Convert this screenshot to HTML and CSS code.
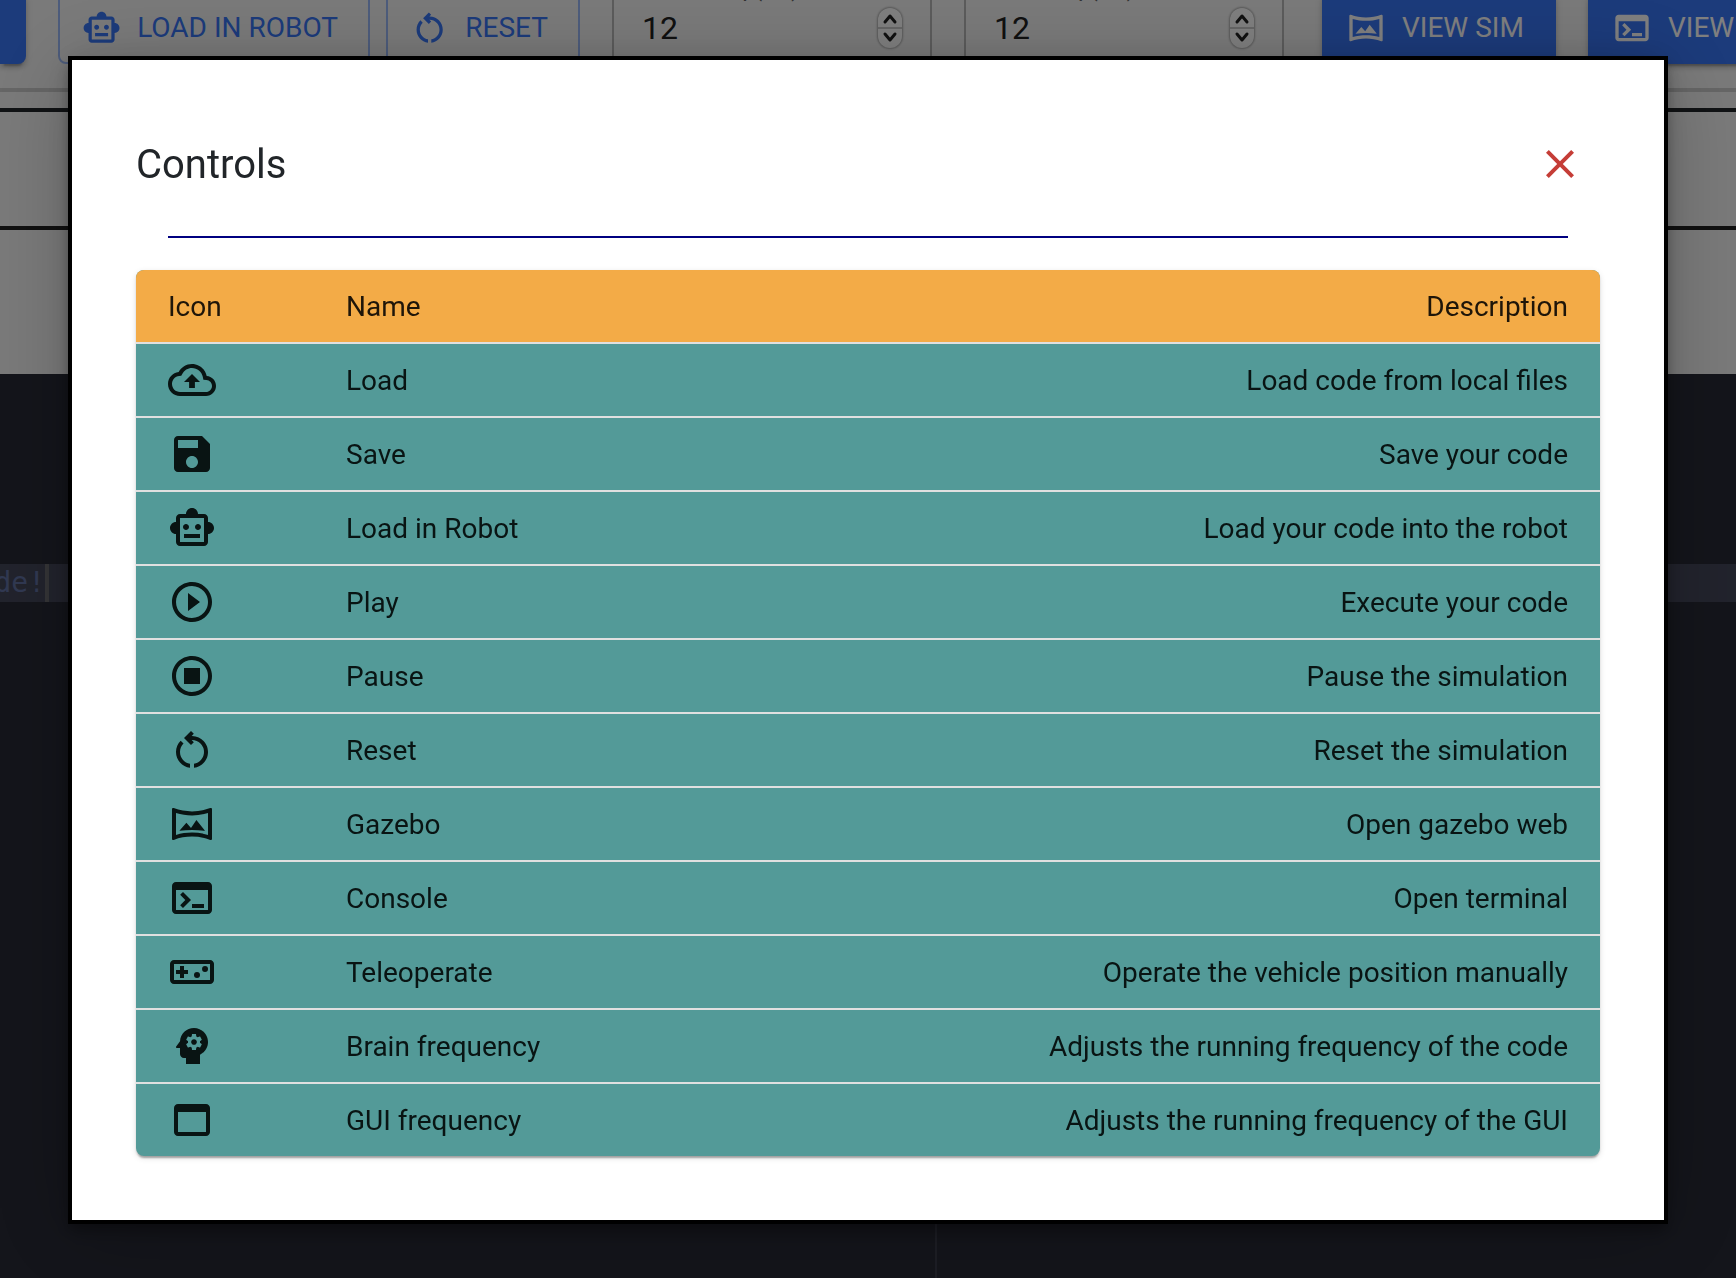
FILE: index.html
```html
<!DOCTYPE html>
<html lang="en">
<head>
<meta charset="utf-8">
<title>Controls</title>
<meta name="viewport" content="width=device-width, initial-scale=1">
<link rel="stylesheet" href="styles.css">
</head>
<body>
<svg class="sprite" aria-hidden="true">
  <symbol id="i-cloud" viewBox="0 0 24 24"><path d="M19.35 10.04C18.67 6.59 15.64 4 12 4 9.11 4 6.6 5.64 5.35 8.04 2.34 8.36 0 10.91 0 14c0 3.31 2.69 6 6 6h13c2.76 0 5-2.24 5-5 0-2.64-2.05-4.78-4.65-4.96zM19 18H6c-2.21 0-4-1.79-4-4 0-2.05 1.53-3.76 3.56-3.97l1.07-.11.5-.95C8.08 7.14 9.94 6 12 6c2.62 0 4.88 1.86 5.39 4.43l.3 1.5 1.53.11c1.56.1 2.78 1.41 2.78 2.96 0 1.65-1.35 3-3 3zM8 13h2.55v3h2.9v-3H16l-4-4z"/></symbol>
  <symbol id="i-save" viewBox="0 0 24 24"><path d="M17 3H5c-1.11 0-2 .9-2 2v14c0 1.1.89 2 2 2h14c1.1 0 2-.9 2-2V7l-4-4zm-5 16c-1.66 0-3-1.34-3-3s1.34-3 3-3 3 1.34 3 3-1.34 3-3 3zm3-10H5V5h10v4z"/></symbol>
  <symbol id="i-robot" viewBox="0 0 24 24"><path d="M20 9V7c0-1.1-.9-2-2-2h-3c0-1.66-1.34-3-3-3S9 3.34 9 5H6c-1.1 0-2 .9-2 2v2c-1.66 0-3 1.34-3 3s1.34 3 3 3v4c0 1.1.9 2 2 2h12c1.1 0 2-.9 2-2v-4c1.66 0 3-1.34 3-3s-1.34-3-3-3zm-2 10H6V7h12v12zm-9-6c-.83 0-1.5-.67-1.5-1.5S8.17 10 9 10s1.5.67 1.5 1.5S9.83 13 9 13zm7.5-1.5c0 .83-.67 1.5-1.5 1.5s-1.5-.67-1.5-1.5.67-1.5 1.5-1.5 1.5.67 1.5 1.5zM8 15h8v2H8v-2z"/></symbol>
  <symbol id="i-play" viewBox="0 0 24 24"><path d="M10 16.5l6-4.5-6-4.5v9zM12 2C6.48 2 2 6.48 2 12s4.48 10 10 10 10-4.48 10-10S17.52 2 12 2zm0 18c-4.41 0-8-3.59-8-8s3.59-8 8-8 8 3.59 8 8-3.59 8-8 8z"/></symbol>
  <symbol id="i-stop" viewBox="0 0 24 24"><path d="M12 2C6.48 2 2 6.48 2 12s4.48 10 10 10 10-4.48 10-10S17.52 2 12 2zm0 18c-4.41 0-8-3.59-8-8s3.59-8 8-8 8 3.59 8 8-3.59 8-8 8zM8 8h8v8H8z"/></symbol>
  <symbol id="i-reset" viewBox="0 0 24 24"><path d="M6 13c0-1.65.67-3.15 1.76-4.24L6.34 7.34C4.9 8.79 4 10.79 4 13c0 4.08 3.05 7.44 7 7.93v-2.02c-2.83-.48-5-2.94-5-5.91zm14 0c0-4.42-3.58-8-8-8-.06 0-.12.01-.18.01l1.09-1.09L11.5 2.5 8 6l3.5 3.5 1.41-1.41-1.08-1.08c.06 0 .12-.01.17-.01 3.31 0 6 2.69 6 6 0 2.97-2.17 5.43-5 5.91v2.02c3.95-.49 7-3.85 7-7.93z"/></symbol>
  <symbol id="i-panorama" viewBox="0 0 24 24"><path d="M20 6.54v10.91c-2.6-.77-5.28-1.16-8-1.16s-5.4.39-8 1.16V6.54c2.6.77 5.28 1.16 8 1.16 2.72.01 5.4-.38 8-1.16M21.43 4c-.1 0-.2.02-.31.06C18.18 5.16 15.09 5.7 12 5.7s-6.18-.55-9.12-1.64C2.77 4.02 2.66 4 2.57 4c-.34 0-.57.23-.57.63v14.75c0 .39.23.62.57.62.1 0 .2-.02.31-.06 2.94-1.1 6.03-1.64 9.12-1.64s6.18.55 9.12 1.64c.11.04.21.06.31.06.33 0 .57-.23.57-.63V4.63c0-.4-.24-.63-.57-.63zM5.7 15.4l3.5-4 2.3 2.6 2.7-4 4.3 5.4c-4.2-.5-8.6-.5-12.8 0z"/></symbol>
  <symbol id="i-terminal" viewBox="0 0 24 24"><path d="M20 4H4c-1.11 0-2 .9-2 2v12c0 1.1.89 2 2 2h16c1.1 0 2-.9 2-2V6c0-1.1-.89-2-2-2zm0 14H4V8h16v10zm-2-1h-6v-2h6v2zM7.5 17l-1.41-1.41L8.67 13l-2.59-2.59L7.5 9l4 4-4 4z"/></symbol>
  <symbol id="i-gamepad" viewBox="0 0 24 24"><path d="M21 6H3c-1.1 0-2 .9-2 2v8c0 1.1.9 2 2 2h18c1.1 0 2-.9 2-2V8c0-1.1-.9-2-2-2zm0 10H3V8h18v8zM6 15h2v-2h2v-2H8V9H6v2H4v2h2z"/><circle cx="14.5" cy="13.5" r="1.5"/><circle cx="18.5" cy="10.5" r="1.5"/></symbol>
  <symbol id="i-brain" viewBox="0 0 24 24"><path d="M13 8.57c-.79 0-1.43.64-1.43 1.43s.64 1.43 1.43 1.43 1.43-.64 1.43-1.43-.64-1.43-1.43-1.43z"/><path d="M13 3C9.25 3 6.2 5.94 6.02 9.64L4.1 12.2c-.25.33-.01.8.4.8H6v3c0 1.1.9 2 2 2h1v3h7v-4.68c2.36-1.12 4-3.53 4-6.32 0-3.87-3.13-7-7-7zm3 7c0 .13-.01.26-.02.39l.83.66c.08.06.1.16.05.25l-.8 1.39c-.05.09-.16.12-.24.09l-.99-.4c-.21.16-.43.29-.67.39L14 13.83c-.01.1-.1.17-.2.17h-1.6c-.1 0-.18-.07-.2-.17l-.15-1.06c-.25-.1-.47-.23-.68-.39l-.99.4c-.09.03-.2 0-.25-.09l-.8-1.39c-.05-.08-.03-.19.05-.25l.84-.66c-.01-.13-.02-.26-.02-.39s.02-.27.04-.39l-.85-.66c-.08-.06-.1-.16-.05-.26l.8-1.38c.05-.09.15-.12.24-.09l1 .4c.2-.15.43-.29.67-.39L12 6.17c.02-.1.1-.17.2-.17h1.6c.1 0 .18.07.2.17l.15 1.06c.24.1.46.23.67.39l1-.4c.09-.03.2 0 .24.09l.8 1.38c.05.09.03.2-.05.26l-.85.66c.03.12.04.25.04.39z"/></symbol>
  <symbol id="i-window" viewBox="0 0 24 24"><path d="M19 4H5c-1.11 0-2 .9-2 2v12c0 1.1.89 2 2 2h14c1.1 0 2-.9 2-2V6c0-1.1-.9-2-2-2zm0 14H5V8h14v10z"/></symbol>
  <symbol id="i-close" viewBox="0 0 24 24"><path d="M19 6.41L17.59 5 12 10.59 6.41 5 5 6.41 10.59 12 5 17.59 6.41 19 12 13.41 17.59 19 19 17.59 13.41 12z"/></symbol>
</svg>

<div class="app">
  <div class="toolbar">
    <button class="btn solid first" type="button" aria-label="Save"></button>
    <div class="group">
      <button class="btn outline robot" type="button"><svg><use href="#i-robot"/></svg>LOAD IN ROBOT</button>
      <button class="btn outline reset" type="button"><svg><use href="#i-reset"/></svg>RESET</button>
    </div>
    <div class="field">
      <label for="brain">Brain Freq (Hz)</label>
      <input id="brain" type="text" inputmode="numeric" value="12">
      <span class="stepper"><svg viewBox="0 0 24 40"><path d="M7 14l5-6 5 6M7 26l5 6 5-6"/><path class="split" d="M0 20h24"/></svg></span>
    </div>
    <div class="field">
      <label for="gui">GUI Freq (Hz)</label>
      <input id="gui" type="text" inputmode="numeric" value="12">
      <span class="stepper"><svg viewBox="0 0 24 40"><path d="M7 14l5-6 5 6M7 26l5 6 5-6"/><path class="split" d="M0 20h24"/></svg></span>
    </div>
    <div class="group views">
      <button class="btn solid sim" type="button"><svg><use href="#i-panorama"/></svg>VIEW SIM</button>
      <button class="btn solid" type="button"><svg><use href="#i-terminal"/></svg>VIEW CONSOLE</button>
    </div>
  </div>
  <div class="band strip"></div>
  <div class="band info"></div>
  <div class="band blank"></div>
  <div class="editor">
    <div class="code-line"><span class="code">de!</span><span class="cursor"></span></div>
    <div class="margin-line"></div>
  </div>
</div>

<div class="backdrop">
  <section class="modal" role="dialog" aria-modal="true" aria-labelledby="title">
    <header class="modal-head">
      <h2 id="title">Controls</h2>
      <button class="close" type="button" aria-label="Close"><svg><use href="#i-close"/></svg></button>
    </header>
    <hr class="rule">
    <div class="table-wrap">
      <table>
        <thead><tr><th class="icon" scope="col">Icon</th><th scope="col">Name</th><th class="desc" scope="col">Description</th></tr></thead>
        <tbody>
          <tr><td class="icon"><svg><use href="#i-cloud"/></svg></td><td>Load</td><td class="desc">Load code from local files</td></tr>
          <tr><td class="icon"><svg><use href="#i-save"/></svg></td><td>Save</td><td class="desc">Save your code</td></tr>
          <tr><td class="icon"><svg><use href="#i-robot"/></svg></td><td>Load in Robot</td><td class="desc">Load your code into the robot</td></tr>
          <tr><td class="icon"><svg><use href="#i-play"/></svg></td><td>Play</td><td class="desc">Execute your code</td></tr>
          <tr><td class="icon"><svg><use href="#i-stop"/></svg></td><td>Pause</td><td class="desc">Pause the simulation</td></tr>
          <tr><td class="icon"><svg><use href="#i-reset"/></svg></td><td>Reset</td><td class="desc">Reset the simulation</td></tr>
          <tr><td class="icon"><svg><use href="#i-panorama"/></svg></td><td>Gazebo</td><td class="desc">Open gazebo web</td></tr>
          <tr><td class="icon"><svg><use href="#i-terminal"/></svg></td><td>Console</td><td class="desc">Open terminal</td></tr>
          <tr><td class="icon"><svg><use href="#i-gamepad"/></svg></td><td>Teleoperate</td><td class="desc">Operate the vehicle position manually</td></tr>
          <tr><td class="icon"><svg><use href="#i-brain"/></svg></td><td>Brain frequency</td><td class="desc">Adjusts the running frequency of the code</td></tr>
          <tr><td class="icon"><svg><use href="#i-window"/></svg></td><td>GUI frequency</td><td class="desc">Adjusts the running frequency of the GUI</td></tr>
        </tbody>
      </table>
    </div>
  </section>
</div>
</body>
</html>
```
FILE: styles.css
```css
* { box-sizing: border-box; }

body {
  margin: 0;
  font-family: Roboto, "Liberation Sans", sans-serif;
  font-size: 28px;
  line-height: 40px;
  color: #212529;
  overflow: hidden;
}

.sprite { display: none; }

svg { fill: currentColor; }

/* Page behind the dialog, scrolled part of the way down */
.app {
  display: flex;
  flex-direction: column;
  height: 100vh;
  overflow: hidden;
  background: #f5f5f5;
}

.toolbar {
  display: flex;
  flex: none;
  align-items: center;
  gap: 32px;
  height: 124px;
  margin-top: -32px;
  border-bottom: 4px solid #cccccc;
}

.group { display: flex; gap: 16px; }
.group.views { gap: 32px; padding-left: 6px; }

.btn {
  display: flex;
  flex: none;
  align-items: center;
  gap: 16px;
  height: 72px;
  padding: 0 32px 0 24px;
  border: 0;
  border-radius: 8px;
  font: inherit;
  white-space: nowrap;
}
.btn svg { width: 40px; height: 40px; }

.solid {
  background: #3876f6;
  color: #ffffff;
  box-shadow: 0 6px 2px -4px rgba(0, 0, 0, .2), 0 4px 4px rgba(0, 0, 0, .14), 0 2px 10px rgba(0, 0, 0, .12);
}
.solid.first { width: 26px; padding: 0; border-radius: 0 8px 8px 0; }
.outline {
  padding: 0 30px 0 22px;
  border: 2px solid #9bb9f8;
  background: none;
  color: #3876f6;
}
.robot { width: 312px; }
.reset { width: 194px; }
.sim { width: 234px; }

.field {
  position: relative;
  display: flex;
  flex: none;
  align-items: center;
  width: 320px;
  height: 80px;
  padding: 0 28px;
  border: 2px solid #b8b8b8;
  border-radius: 8px;
}
.field label {
  position: absolute;
  top: -18px;
  left: 16px;
  padding: 0 10px;
  font-size: 24px;
  line-height: 32px;
  color: #666666;
  background: #f5f5f5;
}
.field input {
  flex: 1;
  min-width: 0;
  padding: 0;
  border: 0;
  background: none;
  font: inherit;
  font-size: 32px;
  color: #212121;
}
.stepper {
  width: 24px;
  height: 40px;
  border-radius: 12px;
  background: #ffffff;
  box-shadow: 0 0 2px 1px #b0b0b0;
}
.stepper svg {
  display: block;
  width: 24px;
  height: 40px;
  fill: none;
  stroke: #222222;
  stroke-width: 3;
  stroke-linecap: round;
  stroke-linejoin: round;
}
.stepper .split { stroke: #cccccc; stroke-width: 2; stroke-linecap: butt; }

.band { flex: none; }
.strip { height: 20px; border-bottom: 4px solid #212529; }
.info { height: 118px; border-bottom: 4px solid #212121; }
.blank { height: 144px; }

.editor {
  position: relative;
  flex: 1;
  padding-top: 190px;
  background: #282a36;
}
.code-line {
  display: flex;
  height: 38px;
  background: #44475a;
  color: #6272a4;
  font: 28px/38px "DejaVu Sans Mono", "Liberation Mono", monospace;
}
.code { display: flex; justify-content: flex-end; width: 45px; }
.cursor { width: 4px; background: #68686c; }
.margin-line {
  position: absolute;
  top: 0;
  bottom: 0;
  left: 935px;
  width: 2px;
  background: #3a3c4a;
}

.backdrop {
  position: fixed;
  inset: 0;
  display: flex;
  align-items: flex-start;
  justify-content: center;
  padding: 56px 68px;
  background: rgba(0, 0, 0, .5);
}

.modal {
  flex: 1;
  padding: 64px;
  border: 4px solid #000000;
  background: #ffffff;
  box-shadow: 0 6px 10px -2px rgba(0, 0, 0, .2), 0 10px 16px rgba(0, 0, 0, .14), 0 2px 28px rgba(0, 0, 0, .12), 0 10px 80px rgba(0, 0, 0, .2);
}
.modal-head {
  display: flex;
  align-items: center;
  justify-content: space-between;
}
.modal-head h2 {
  margin: 0;
  padding-top: 2px;
  font-size: 40px;
  line-height: 64px;
  font-weight: 400;
}
.close {
  padding: 16px;
  border: 0;
  background: none;
  color: #c53d37;
}
.close svg { display: block; width: 48px; height: 48px; }

.rule {
  height: 2px;
  margin: 32px;
  border: 0;
  background: #000080;
}

.table-wrap {
  overflow: hidden;
  border-radius: 8px;
  background: #539a98;
  box-shadow: 0 4px 2px -2px rgba(0, 0, 0, .2), 0 2px 2px rgba(0, 0, 0, .14), 0 2px 6px rgba(0, 0, 0, .12);
}
table { width: 100%; border-collapse: separate; border-spacing: 0; }
th, td {
  height: 74px;
  padding: 16px 32px 14px;
  border-bottom: 2px solid #e0e0e0;
  font-weight: 400;
  text-align: left;
  vertical-align: middle;
  color: #091413;
}
th { background: #f3ab47; color: #1e1509; }
.icon { width: 178px; }
td.icon { padding: 12px 32px; }
th.desc, td.desc { text-align: right; }
tbody tr:last-child td { height: 72px; border-bottom: 0; }
td svg { display: block; width: 48px; height: 48px; }
```
